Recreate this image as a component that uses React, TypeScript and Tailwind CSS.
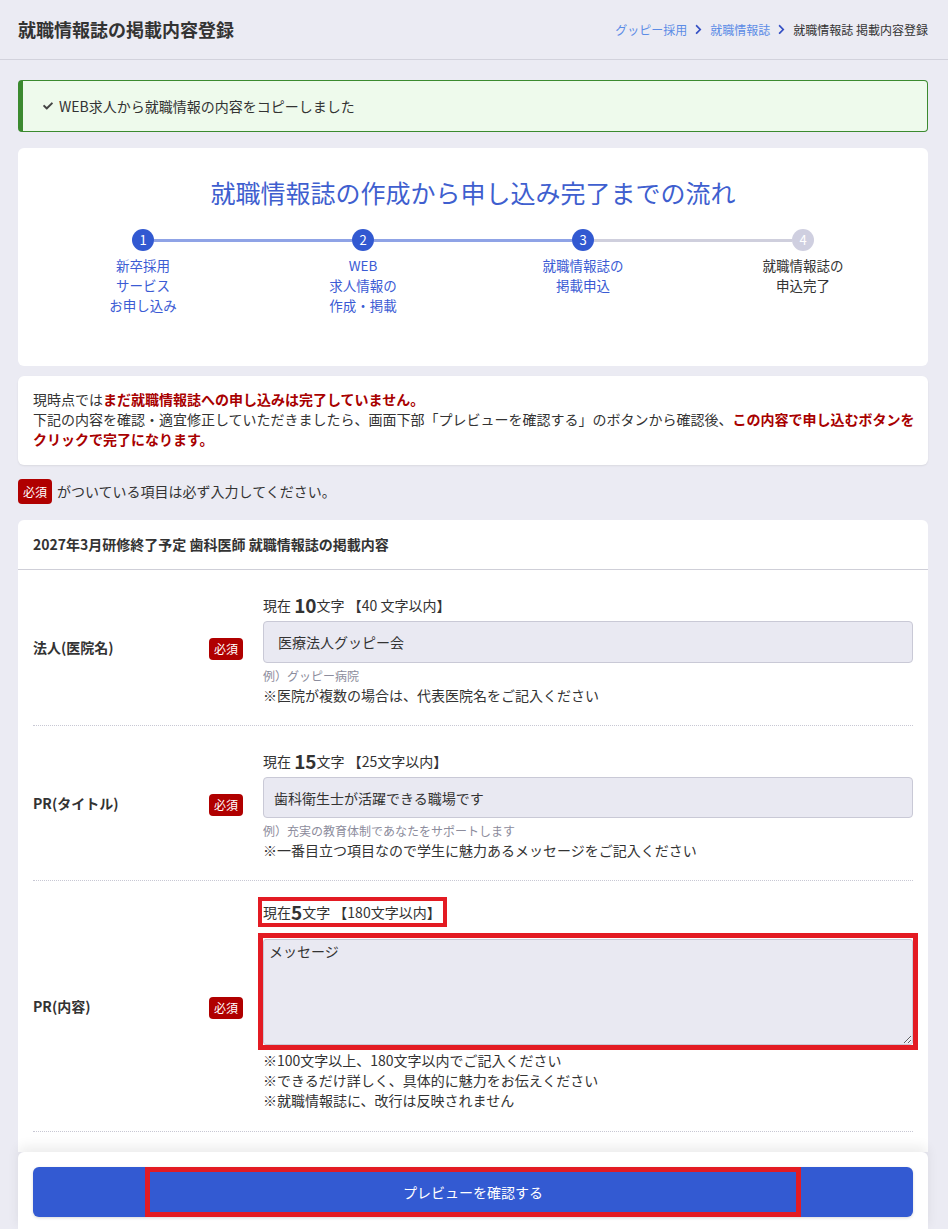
import { FaCheck, FaChevronRight } from "react-icons/fa";

const font = { fontFamily: '"Noto Sans CJK JP", "Noto Sans", sans-serif' };

function Required({ big = false }: { big?: boolean }) {
  return (
    <span
      className={
        "inline-flex items-center justify-center rounded-[4px] bg-[#b00000] text-white text-[12px] " +
        (big ? "w-[34px] h-[25px]" : "w-[34px] h-[22px]")
      }
    >
      必須
    </span>
  );
}

const steps = [
  { n: 1, lines: ["新卒採用", "サービス", "お申し込み"], done: true },
  { n: 2, lines: ["WEB", "求人情報の", "作成・掲載"], done: true },
  { n: 3, lines: ["就職情報誌の", "掲載申込"], done: true },
  { n: 4, lines: ["就職情報誌の", "申込完了"], done: false },
];

function Counter({ now, limit }: { now: string; limit: string }) {
  return (
    <div className="h-[30px] flex items-center text-[14px] text-[#333]">
      現在&nbsp;<span className="text-[19px] font-bold">{now}</span>文字&nbsp;【{limit}】
    </div>
  );
}

function Row({ label, children }: { label: string; children: React.ReactNode }) {
  return (
    <div className="flex items-center border-b border-dotted border-[#c8c8d4]">
      <div className="w-[176px] text-[14px] font-bold text-[#333]">{label}</div>
      <div className="w-[34px]">
        <Required />
      </div>
      <div className="flex-1 ml-[20px]">{children}</div>
    </div>
  );
}

export default function App() {
  return (
    <div className="min-h-screen bg-[#ebebf3] text-[#333]" style={font}>
      <header className="h-[60px] border-b border-[#d2d2dc] pl-[18px] pr-[20px] flex items-center justify-between">
        <h1 className="text-[18px] font-bold text-[#333]">就職情報誌の掲載内容登録</h1>
        <nav className="flex items-center gap-[6px] text-[12px]">
          <a className="text-[#5c8ce6]">グッピー採用</a>
          <FaChevronRight className="text-[#3550c4] text-[11px]" />
          <a className="text-[#5c8ce6]">就職情報誌</a>
          <FaChevronRight className="text-[#3550c4] text-[11px]" />
          <span className="text-[#333]">就職情報誌 掲載内容登録</span>
        </nav>
      </header>

      <main className="pl-[18px] pr-[20px] pt-[20px]">
        <div className="h-[52px] rounded-[4px] border border-[#3b8a2f] border-l-[5px] bg-[#eefaec] flex items-center pl-[20px] gap-[6px] text-[14px] text-[#333]">
          <FaCheck className="text-[#444] text-[10px]" />
          WEB求人から就職情報の内容をコピーしました
        </div>

        <section className="mt-[16px] bg-white rounded-[6px] px-[15px] pt-[28px] pb-[51px]">
          <h2 className="text-center text-[25px] leading-[32px] text-[#3f5fcf]">
            就職情報誌の作成から申し込み完了までの流れ
          </h2>
          <div className="mt-[21px] flex items-center px-[99px]">
            {steps.map((s, i) => (
              <div key={s.n} className={"flex items-center " + (i < 3 ? "flex-1" : "")}>
                <span
                  className={
                    "w-[22px] h-[22px] rounded-full flex items-center justify-center text-white text-[13px] shrink-0 " +
                    (s.done ? "bg-[#3259d1]" : "bg-[#cfcfe0]")
                  }
                >
                  {s.n}
                </span>
                {i < 3 && (
                  <span className={"flex-1 h-[3px] " + (i < 2 ? "bg-[#8fa3e6]" : "bg-[#cfcfdd]")} />
                )}
              </div>
            ))}
          </div>
          <div className="grid grid-cols-4 mt-[4px]">
            {steps.map((s) => (
              <div
                key={s.n}
                className={"text-center text-[13.5px] leading-[20px] " + (s.done ? "text-[#3b5bd4]" : "text-[#333]")}
              >
                {s.lines.map((l) => (
                  <div key={l}>{l}</div>
                ))}
              </div>
            ))}
          </div>
        </section>

        <section className="mt-[10px] bg-white rounded-[6px] shadow-[0_1px_2px_rgba(0,0,0,0.08)] pl-[15px] pr-[10px] pt-[13px] pb-[16px] text-[14px] leading-[20px]">
          <p>
            現時点では<b className="text-[#a80000]">まだ就職情報誌への申し込みは完了していません。</b>
          </p>
          <p>
            下記の内容を確認・適宜修正していただきましたら、画面下部「プレビューを確認する」のボタンから確認後、
            <b className="text-[#a80000]">この内容で申し込むボタンをクリックで完了になります。</b>
          </p>
        </section>

        <div className="mt-[14px] flex items-center gap-[5px] text-[14px]">
          <Required big />
          がついている項目は必ず入力してください。
        </div>

        <section className="mt-[16px] bg-white rounded-t-[6px]">
          <div className="h-[50px] border-b border-[#cfcfd8] px-[15px] flex items-center text-[14px] font-bold">
            2027年3月研修終了予定 歯科医師 就職情報誌の掲載内容
          </div>
          <div className="px-[15px] pb-[20px]">
            <Row label="法人(医院名)">
              <div className="pt-[20px] pb-[20px]">
                <Counter now="10" limit="40 文字以内" />
                <input
                  readOnly
                  value="医療法人グッピー会"
                  className="mt-px w-full h-[42px] rounded-[4px] border border-[#c9c9d6] bg-[#e9e9f2] px-[14px] text-[14px] text-[#333] outline-none"
                />
                <div className="mt-[4px] text-[12px] leading-[18px] text-[#8c8c9c]">例）グッピー病院</div>
                <div className="text-[14px] leading-[20px]">※医院が複数の場合は、代表医院名をご記入ください</div>
              </div>
            </Row>
            <Row label="PR(タイトル)">
              <div className="pt-[20px] pb-[20px]">
                <Counter now="15" limit="25文字以内" />
                <input
                  readOnly
                  value="歯科衛生士が活躍できる職場です"
                  className="mt-px w-full h-[41px] rounded-[4px] border border-[#c9c9d6] bg-[#e9e9f2] px-[10px] text-[14px] text-[#333] outline-none"
                />
                <div className="mt-[4px] text-[12px] leading-[18px] text-[#8c8c9c]">
                  例）充実の教育体制であなたをサポートします
                </div>
                <div className="text-[14px] leading-[20px]">※一番目立つ項目なので学生に魅力あるメッセージをご記入ください</div>
              </div>
            </Row>
            <Row label="PR(内容)">
              <div className="pt-[16px] pb-[21px]">
                <div className="-ml-[5px] inline-flex h-[30px] items-center border-4 border-[#e31b23] pl-px pr-[2px] text-[14px]">
                  現在<span className="text-[19px] font-bold">5</span>文字 【180文字以内】
                </div>
                <div className="mt-[6px] -mx-[5px] border-[5px] border-[#e31b23] pt-px">
                  <textarea
                    readOnly
                    defaultValue="メッセージ"
                    className="block w-full h-[106px] rounded-[3px] border border-[#c9c9d6] bg-[#e9e9f2] px-[5px] py-[1px] text-[14px] text-[#333] outline-none"
                  />
                </div>
                <div className="text-[14px] leading-[20px]">
                  <div>※100文字以上、180文字以内でご記入ください</div>
                  <div>※できるだけ詳しく、具体的に魅力をお伝えください</div>
                  <div>※就職情報誌に、改行は反映されません</div>
                </div>
              </div>
            </Row>
          </div>
        </section>

        <div className="bg-white rounded-t-[6px] shadow-[0_-6px_12px_rgba(0,0,0,0.07)] px-[15px] pt-[15px] pb-[15px]">
          <button className="w-full h-[50px] rounded-[6px] bg-[#335ad2] flex items-center justify-center shadow-[0_1px_3px_rgba(0,0,0,0.15)]">
            <span className="w-[656px] h-full border-[5px] border-[#e31b23] flex items-center justify-center text-white text-[14px]">
              プレビューを確認する
            </span>
          </button>
        </div>
      </main>
    </div>
  );
}
